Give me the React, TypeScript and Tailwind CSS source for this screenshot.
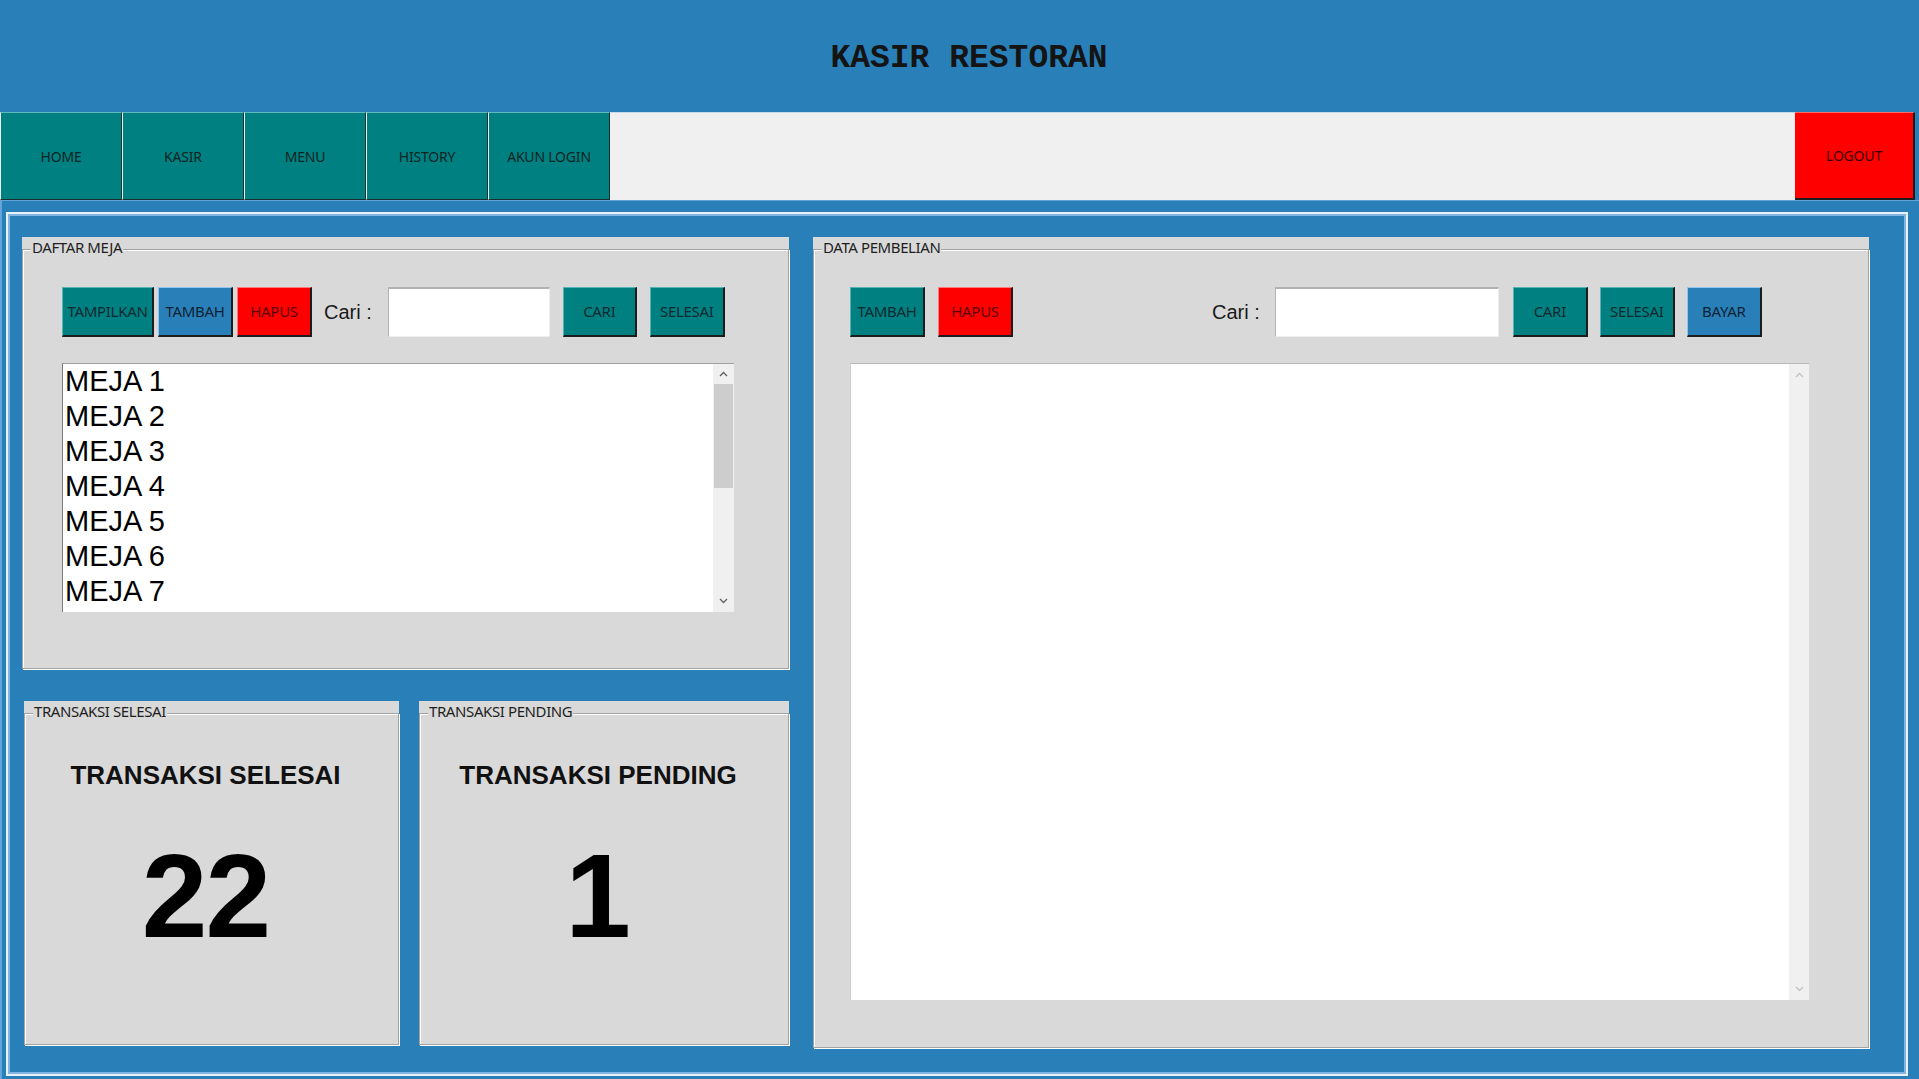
import React from "react";

type Tone = "teal" | "blue" | "red";

function Btn({ label, tone, className = "" }: { label: string; tone: Tone; className?: string }) {
  const toneCls =
    tone === "teal"
      ? "bg-[#008080] border-t-[#55b3b3] border-l-[#55b3b3] text-[#0e2a30]"
      : tone === "blue"
      ? "bg-[#2980b9] border-t-[#93c5ec] border-l-[#93c5ec] text-[#0e2233]"
      : "bg-[#ff0000] border-t-[#ff7a7a] border-l-[#ff7a7a] text-[#5a0000]";
  return (
    <div
      className={
        "h-[50px] shrink-0 flex items-center justify-center border-t border-l border-r-2 border-b-2 border-r-[#1c1c1c] border-b-[#1c1c1c] text-[15px] font-['Noto_Sans',sans-serif] tracking-[-0.3px] " +
        toneCls +
        " " +
        className
      }
    >
      {label}
    </div>
  );
}

function NavBtn({ label }: { label: string }) {
  return (
    <div className="w-[122px] h-full flex items-center justify-center bg-[#008080] border-t border-l border-t-[#5fb9b9] border-l-[#e8f4f4] border-r border-b border-r-[#1a2e2e] border-b-[#1a2e2e] text-[14px] text-[#0c2424] font-['Noto_Sans',sans-serif] tracking-[-0.2px]">
      {label}
    </div>
  );
}

function Panel({ title, className = "", children }: { title: string; className?: string; children?: React.ReactNode }) {
  return (
    <div className={"bg-[#d9d9d9] pt-[12px] shrink-0 " + className}>
      <div className="relative h-full border border-[#a3a3a3] shadow-[inset_1px_1px_0_#ffffff,1px_1px_0_#ffffff]">
        <span className="absolute -top-[12px] left-[8px] bg-[#d9d9d9] px-[1px] text-[15px] leading-[18px] text-[#1e1e1e] font-['Noto_Sans',sans-serif] tracking-[-0.4px]">
          {title}
        </span>
        {children}
      </div>
    </div>
  );
}

function Chevron({ up, color }: { up: boolean; color: string }) {
  return (
    <svg width="9" height="6" viewBox="0 0 9 6" fill="none">
      <path d={up ? "M1 5 L4.5 1.5 L8 5" : "M1 1 L4.5 4.5 L8 1"} stroke={color} strokeWidth="1.3" />
    </svg>
  );
}

function SearchLabel() {
  return (
    <span className="shrink-0 text-[20px] text-[#1a1a1a] font-['Liberation_Sans',Arial,sans-serif]">Cari :</span>
  );
}

function SearchInput({ className }: { className: string }) {
  return (
    <div className={"h-[50px] shrink-0 bg-white border-t-2 border-l border-t-[#b2b2b2] border-l-[#b2b2b2] border-r border-b border-r-[#eeeeee] border-b-[#eeeeee] " + className} />
  );
}

export default function App() {
  const mejas = ["MEJA 1", "MEJA 2", "MEJA 3", "MEJA 4", "MEJA 5", "MEJA 6", "MEJA 7"];
  return (
    <div className="w-[1919px] h-[1079px] bg-[#2980b9] overflow-hidden flex flex-col">
      {/* Header */}
      <div className="h-[112px] shrink-0 flex items-center justify-center pl-[19px] pt-[5px]">
        <h1 className="text-[33px] font-bold text-[#141414] font-['Liberation_Mono','Courier_New',monospace] leading-none">
          KASIR RESTORAN
        </h1>
      </div>

      {/* Nav */}
      <div className="h-[88px] shrink-0 flex pr-[4px]">
        <NavBtn label="HOME" />
        <NavBtn label="KASIR" />
        <NavBtn label="MENU" />
        <NavBtn label="HISTORY" />
        <NavBtn label="AKUN LOGIN" />
        <div className="flex-1 bg-[#f0f0f0] border-t border-t-[#c9dcea]" />
        <div className="w-[120px] h-full flex items-center justify-center bg-[#ff0000] border-t border-t-[#ff6b6b] border-r-2 border-b-2 border-r-[#1c1c1c] border-b-[#1c1c1c] text-[14px] text-[#3a0000] font-['Noto_Sans',sans-serif] tracking-[-0.2px]">
          LOGOUT
        </div>
      </div>

      {/* Main */}
      <div className="flex-1 border-t border-l-2 border-[#63a5db]">
        <div className="ml-[4px] mt-[11px] w-[1902px] h-[864px] border-2 border-[#e9f1f8] shadow-[inset_0_0_0_2px_#82b6e2] pl-[14px] pt-[23px] flex gap-[24px]">
          {/* Left column */}
          <div className="w-[767px] shrink-0 flex flex-col">
            <Panel title="DAFTAR MEJA" className="h-[432px]">
              <div className="pl-[39px] pt-[37px]">
                <div className="flex items-center">
                  <Btn label="TAMPILKAN" tone="teal" className="w-[92px]" />
                  <Btn label="TAMBAH" tone="blue" className="w-[75px] ml-[4px]" />
                  <Btn label="HAPUS" tone="red" className="w-[75px] ml-[4px]" />
                  <div className="ml-[12px]">
                    <SearchLabel />
                  </div>
                  <SearchInput className="w-[162px] ml-[16px]" />
                  <Btn label="CARI" tone="teal" className="w-[74px] ml-[13px]" />
                  <Btn label="SELESAI" tone="teal" className="w-[75px] ml-[13px]" />
                </div>
                <div className="mt-[26px] w-[672px] h-[249px] flex bg-white border-t border-l border-t-[#a0a0a0] border-l-[#7a7a7a]">
                  <div className="flex-1 overflow-hidden pl-[2px]">
                    {mejas.map((m) => (
                      <div
                        key={m}
                        className="h-[35px] leading-[35px] text-[29px] text-black font-['Liberation_Sans',Arial,sans-serif]"
                      >
                        {m}
                      </div>
                    ))}
                  </div>
                  <div className="w-[21px] shrink-0 bg-[#f0f0f0] flex flex-col items-center">
                    <div className="h-[20px] flex items-center justify-center">
                      <Chevron up color="#606060" />
                    </div>
                    <div className="w-[19px] h-[104px] bg-[#cdcdcd]" />
                    <div className="flex-1" />
                    <div className="h-[22px] flex items-center justify-center">
                      <Chevron up={false} color="#606060" />
                    </div>
                  </div>
                </div>
              </div>
            </Panel>

            <div className="mt-[32px] ml-[2px] flex gap-[20px]">
              <Panel title="TRANSAKSI SELESAI" className="w-[375px] h-[344px]">
                <div className="flex flex-col items-center pr-[12px] pt-[45px]">
                  <div className="h-[32px] leading-[32px] text-[26px] font-bold text-[#111] font-['Liberation_Sans',Arial,sans-serif]">
                    TRANSAKSI SELESAI
                  </div>
                  <div className="mt-[47px] h-[116px] leading-[116px] text-[118px] font-bold text-black font-['Liberation_Sans',Arial,sans-serif] tracking-[-2px]">
                    22
                  </div>
                </div>
              </Panel>
              <Panel title="TRANSAKSI PENDING" className="w-[370px] h-[344px]">
                <div className="flex flex-col items-center pr-[12px] pt-[45px]">
                  <div className="h-[32px] leading-[32px] text-[26px] font-bold text-[#111] font-['Liberation_Sans',Arial,sans-serif]">
                    TRANSAKSI PENDING
                  </div>
                  <div className="mt-[47px] h-[116px] leading-[116px] text-[118px] font-bold text-black font-['Liberation_Sans',Arial,sans-serif]">
                    1
                  </div>
                </div>
              </Panel>
            </div>
          </div>

          {/* Right panel */}
          <Panel title="DATA PEMBELIAN" className="w-[1056px] h-[811px]">
            <div className="pl-[36px] pt-[37px]">
              <div className="flex items-center">
                <Btn label="TAMBAH" tone="teal" className="w-[75px]" />
                <Btn label="HAPUS" tone="red" className="w-[75px] ml-[13px]" />
                <div className="ml-[199px]">
                  <SearchLabel />
                </div>
                <SearchInput className="w-[224px] ml-[15px]" />
                <Btn label="CARI" tone="teal" className="w-[75px] ml-[14px]" />
                <Btn label="SELESAI" tone="teal" className="w-[75px] ml-[12px]" />
                <Btn label="BAYAR" tone="blue" className="w-[75px] ml-[12px]" />
              </div>
              <div className="mt-[26px] w-[959px] h-[637px] flex bg-white border-t border-l border-t-[#b8b8b8] border-l-[#d0d0d0]">
                <div className="flex-1" />
                <div className="w-[20px] shrink-0 bg-[#f0f0f0] flex flex-col items-center">
                  <div className="h-[22px] flex items-center justify-center">
                    <Chevron up color="#c2c2c2" />
                  </div>
                  <div className="flex-1" />
                  <div className="h-[22px] flex items-center justify-center">
                    <Chevron up={false} color="#c2c2c2" />
                  </div>
                </div>
              </div>
            </div>
          </Panel>
        </div>
      </div>
    </div>
  );
}
